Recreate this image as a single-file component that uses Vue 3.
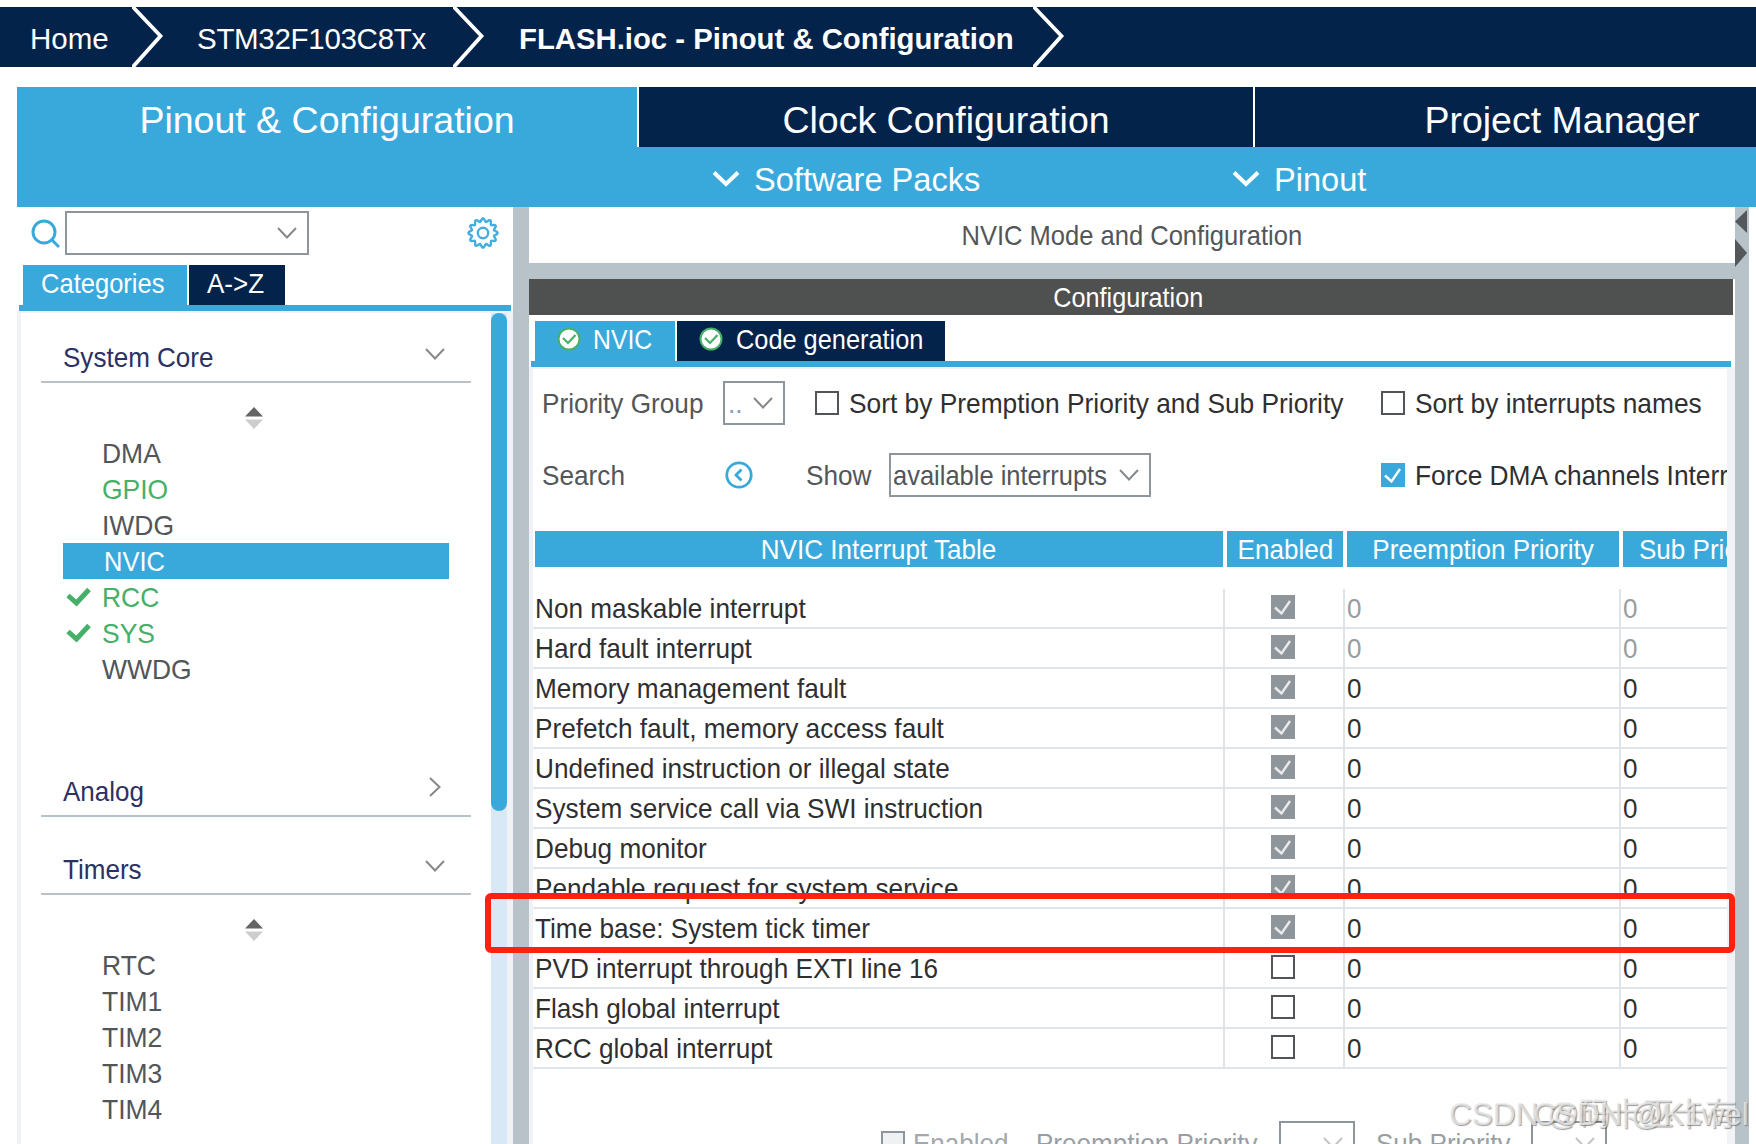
<template>
  <div class="app">
    <nav class="breadcrumb">
      <span class="crumb home">Home</span>
      <svg class="crumb-arrow" viewBox="0 0 34 60"><path d="M-1 -2 L28.5 29 L-1 62" /></svg>
      <span class="crumb chip">STM32F103C8Tx</span>
      <svg class="crumb-arrow" viewBox="0 0 34 60"><path d="M-1 -2 L28.5 29 L-1 62" /></svg>
      <span class="crumb current">FLASH.ioc - Pinout &amp; Configuration</span>
      <svg class="crumb-arrow" viewBox="0 0 34 60"><path d="M-1 -2 L28.5 29 L-1 62" /></svg>
    </nav>

    <div class="main-tabs">
      <div v-for="tab in mainTabs" :key="tab" class="main-tab" :class="{ active: tab === activeTab }">{{ tab }}</div>
    </div>
    <div class="sub-bar">
      <div v-for="menu in menus" :key="menu" class="sub-menu">
        <svg class="menu-chevron" viewBox="0 0 28 18"><path d="M2 2.5 L14 14 L26 2.5" /></svg>
        <span>{{ menu }}</span>
      </div>
    </div>

    <div class="body">
      <aside class="sidebar">
        <div class="search-row">
          <svg class="search-icon" viewBox="0 0 30 30">
            <circle cx="13" cy="13" r="11" />
            <path d="M20 20 L28 28" />
          </svg>
          <div class="combo search-combo">
            <svg class="chevron" viewBox="0 0 20 12"><path d="M1 1 L10 10.5 L19 1" /></svg>
          </div>
          <svg class="gear" viewBox="0 0 32 32">
            <path :d="gearPath" />
            <circle cx="16" cy="16" r="5.2" />
          </svg>
        </div>
        <div class="side-tabs">
          <div class="side-tab active"><span class="txt">Categories</span></div>
          <div class="side-tab dark"><span class="txt">A-&gt;Z</span></div>
        </div>
        <div class="categories">
          <div class="category-list">
            <section v-for="cat in categories" :key="cat.name" class="category">
              <div class="category-head">
                <span class="txt">{{ cat.name }}</span>
                <svg v-if="cat.items.length" class="chevron" viewBox="0 0 20 12"><path d="M1 1 L10 10.5 L19 1" /></svg>
                <svg v-else class="chevron-right" viewBox="0 0 12 20"><path d="M1 1 L10.5 10 L1 19" /></svg>
              </div>
              <template v-if="cat.items.length">
                <div class="sorter">
                  <svg viewBox="0 0 18 22">
                    <path d="M9 0 L18 9.5 H0 Z" fill="#656565" />
                    <path d="M0 12.5 H18 L9 22 Z" fill="#cdcdcd" />
                  </svg>
                </div>
                <ul>
                  <li v-for="item in cat.items" :key="item.name" :class="item.state">
                    <svg v-if="item.checked" class="tick" viewBox="0 0 25 20"><path d="M2 8.5 L10.5 16 L23 2.5" /></svg>
                    <span class="txt">{{ item.name }}</span>
                  </li>
                </ul>
              </template>
            </section>
          </div>
          <div class="scrollbar"><div class="thumb"></div></div>
        </div>
      </aside>

      <main class="content">
        <div class="mode-title"><span class="txt">NVIC Mode and Configuration</span></div>
        <div class="config-title"><span class="txt">Configuration</span></div>
        <div class="config-tabs">
          <div class="config-tab nvic">
            <svg class="ok" viewBox="0 0 24 24"><circle cx="12" cy="12" r="10.5" /><path d="M6 11 L11 16 L18.5 8" /></svg>
            <span class="txt">NVIC</span>
          </div>
          <div class="config-tab dark">
            <svg class="ok" viewBox="0 0 24 24"><circle cx="12" cy="12" r="10.5" /><path d="M6 11 L11 16 L18.5 8" /></svg>
            <span class="txt">Code generation</span>
          </div>
        </div>
        <div class="config-body">
          <div class="option-row">
            <label class="group-label"><span class="txt">Priority Group</span></label>
            <div class="combo group-combo">
              <span class="txt dots">..</span>
              <svg class="chevron" viewBox="0 0 20 12"><path d="M1 1 L10 10.5 L19 1" /></svg>
            </div>
            <div class="check-option sort-priority">
              <span class="box"></span>
              <span class="txt">Sort by Premption Priority and Sub Priority</span>
            </div>
            <div class="check-option">
              <span class="box"></span>
              <span class="txt">Sort by interrupts names</span>
            </div>
          </div>
          <div class="option-row second">
            <label class="search-label"><span class="txt">Search</span></label>
            <svg class="back" viewBox="0 0 28 28"><circle cx="14" cy="14" r="12.2" /><path d="M16.5 8.5 L11 14 L16.5 19.5" /></svg>
            <label class="show-label"><span class="txt">Show</span></label>
            <div class="combo show-combo">
              <span class="txt">available interrupts</span>
              <svg class="chevron" viewBox="0 0 20 12"><path d="M1 1 L10 10.5 L19 1" /></svg>
            </div>
            <div class="check-option force">
              <span class="box blue"><svg viewBox="0 0 24 24"><path d="M4 12.5 L10.5 18.5 L19 6" /></svg></span>
              <span class="txt">Force DMA channels Interrupts</span>
            </div>
          </div>

          <div class="table-head">
            <div><span class="txt">NVIC Interrupt Table</span></div>
            <div><span class="txt">Enabled</span></div>
            <div><span class="txt">Preemption Priority</span></div>
            <div class="sub"><span class="txt">Sub Priority</span></div>
          </div>
          <div class="table-body">
            <div v-for="row in interrupts" :key="row.name" class="table-row" :class="{ locked: row.locked }">
              <div class="name"><span class="txt">{{ row.name }}</span></div>
              <div class="enabled">
                <span class="box" :class="{ grey: row.enabled }">
                  <svg v-if="row.enabled" viewBox="0 0 24 24"><path d="M4 12.5 L10.5 18.5 L19 6" /></svg>
                </span>
              </div>
              <div class="num"><span class="txt">0</span></div>
              <div class="num last"><span class="txt">0</span></div>
            </div>
          </div>

          <div class="footer-row">
            <span class="box disabled"></span>
            <label class="f-enabled"><span class="txt">Enabled</span></label>
            <label class="f-preempt"><span class="txt">Preemption Priority</span></label>
            <div class="combo small"><svg class="chevron" viewBox="0 0 20 12"><path d="M1 1 L10 10.5 L19 1" /></svg></div>
            <label class="f-sub"><span class="txt">Sub Priority</span></label>
            <div class="combo small"><svg class="chevron" viewBox="0 0 20 12"><path d="M1 1 L10 10.5 L19 1" /></svg></div>
          </div>
        </div>
      </main>

      <div class="splitter">
        <svg viewBox="0 0 14 64">
          <path d="M12 3 V26 L0 14.5 Z" />
          <path d="M0 32 L12 46 L0 60 Z" />
        </svg>
      </div>
    </div>

    <div class="highlight"></div>
    <div class="watermark first">CSDN @码卡巫卡有</div>
    <div class="watermark second">CSDN @K1wel</div>
  </div>
</template>

<script setup>
import { ref } from 'vue'

const mainTabs = ['Pinout & Configuration', 'Clock Configuration', 'Project Manager']
const activeTab = ref('Pinout & Configuration')
const menus = ['Software Packs', 'Pinout']

const categories = ref([
  {
    name: 'System Core',
    items: [
      { name: 'DMA' },
      { name: 'GPIO', state: 'used' },
      { name: 'IWDG' },
      { name: 'NVIC', state: 'selected' },
      { name: 'RCC', state: 'used', checked: true },
      { name: 'SYS', state: 'used', checked: true },
      { name: 'WWDG' }
    ]
  },
  { name: 'Analog', items: [] },
  {
    name: 'Timers',
    items: [{ name: 'RTC' }, { name: 'TIM1' }, { name: 'TIM2' }, { name: 'TIM3' }, { name: 'TIM4' }]
  }
])

const interrupts = ref([
  { name: 'Non maskable interrupt', enabled: true, locked: true },
  { name: 'Hard fault interrupt', enabled: true, locked: true },
  { name: 'Memory management fault', enabled: true },
  { name: 'Prefetch fault, memory access fault', enabled: true },
  { name: 'Undefined instruction or illegal state', enabled: true },
  { name: 'System service call via SWI instruction', enabled: true },
  { name: 'Debug monitor', enabled: true },
  { name: 'Pendable request for system service', enabled: true },
  { name: 'Time base: System tick timer', enabled: true },
  { name: 'PVD interrupt through EXTI line 16', enabled: false },
  { name: 'Flash global interrupt', enabled: false },
  { name: 'RCC global interrupt', enabled: false }
])

// wavy outline of the settings gear, 12 teeth
function gearOutline(teeth) {
  const points = []
  for (let i = 0; i < 120; i++) {
    const a = (i / 120) * Math.PI * 2
    const r = 13 + 1.6 * Math.cos(a * teeth)
    points.push(`${(16 + r * Math.cos(a)).toFixed(2)} ${(16 + r * Math.sin(a)).toFixed(2)}`)
  }
  return 'M' + points.join('L') + 'Z'
}
const gearPath = gearOutline(12)
</script>

<style>
body {
  margin: 0;
  background: #fff;
  overflow: hidden;
}
</style>

<style scoped>
.app {
  position: relative;
  box-sizing: border-box;
  width: 1756px;
  height: 1144px;
  padding-top: 7px;
  overflow: hidden;
  display: flex;
  flex-direction: column;
  background: #fff;
  color: #525659;
  font-family: "Liberation Sans", Arial, sans-serif;
  font-size: 28px;
  line-height: 36px;
  white-space: nowrap;
}
svg {
  display: block;
  flex: none;
  fill: none;
}
/* slightly condensed label text */
.txt {
  display: inline-block;
  transform: translateY(1px) scaleX(0.93);
  transform-origin: left center;
}

/* breadcrumb */
.breadcrumb {
  flex: none;
  display: flex;
  height: 60px;
  padding-left: 30px;
  background: #03234b;
  color: #fff;
  font-size: 29.5px;
  line-height: 63px;
}
.crumb { flex: none; }
.home { width: 102px; }
.chip { width: 256px; margin-left: 31px; letter-spacing: -0.3px; }
.current { width: 514px; margin-left: 32px; font-weight: bold; font-size: 29.3px; }
.crumb-arrow {
  width: 34px;
  height: 60px;
}
.crumb-arrow path {
  stroke: #fff;
  stroke-width: 3.8;
}

/* top tabs */
.main-tabs {
  flex: none;
  display: flex;
  gap: 2px;
  height: 60px;
  margin: 20px 0 0 17px;
}
.main-tab {
  flex: none;
  box-sizing: border-box;
  width: 614px;
  padding-top: 6px;
  background: #03234b;
  color: #fff;
  font-size: 37.5px;
  line-height: 54px;
  text-align: center;
}
.main-tab.active {
  width: 620px;
  background: #39a9dc;
}
.sub-bar {
  flex: none;
  display: flex;
  height: 60px;
  margin-left: 17px;
  padding-left: 695px;
  background: #39a9dc;
  color: #fff;
  font-size: 32.6px;
  line-height: 65px;
}
.sub-menu {
  display: flex;
  width: 520px;
  gap: 14px;
}
.menu-chevron {
  width: 28px;
  height: 18px;
  margin-top: 23px;
}
.menu-chevron path {
  stroke: #fff;
  stroke-width: 4;
}

.body {
  flex: 1;
  min-height: 0;
  display: flex;
}

/* combos, checkboxes */
.combo {
  flex: none;
  box-sizing: border-box;
  display: flex;
  align-items: center;
  height: 44px;
  border: 2px solid #8f969b;
}
.chevron {
  width: 20px;
  height: 12px;
}
.chevron path, .chevron-right path {
  stroke: #85898c;
  stroke-width: 2;
}
.combo .chevron { margin-left: auto; }
.box {
  flex: none;
  box-sizing: border-box;
  width: 24px;
  height: 24px;
  border: 2px solid #525557;
}
.box svg {
  width: 24px;
  height: 24px;
  margin: -2px;
}
.box path {
  stroke: #fff;
  stroke-width: 2.4;
}
.box.blue { background: #39a9dc; border-color: #39a9dc; }
.box.grey { background: #8f969b; border-color: #8f969b; }
.box.grey path { stroke: #e8eaec; }
.box.disabled { background: #eff1f3; border-color: #8f969b; }

/* sidebar */
.sidebar {
  flex: none;
  box-sizing: border-box;
  width: 529px;
  padding-left: 17px;
  border-right: 16px solid #b7c2c9;
  display: flex;
  flex-direction: column;
}
.search-row {
  flex: none;
  display: flex;
  align-items: flex-start;
  height: 58px;
}
.search-icon {
  width: 30px;
  height: 30px;
  margin: 12px 4px 0 14px;
  stroke: #39a9dc;
  stroke-width: 3;
}
.search-combo {
  width: 244px;
  margin-top: 4px;
  padding-right: 10px;
}
.gear {
  width: 32px;
  height: 32px;
  margin: 10px 0 0 158px;
  stroke: #45aede;
  stroke-width: 2.4;
}
.side-tabs {
  flex: none;
  display: flex;
  gap: 2px;
  height: 40px;
  margin-left: 2px;
  padding-left: 4px;
  width: 488px;
  border-bottom: 6px solid #39a9dc;
  color: #fff;
  line-height: 36px;
}
.side-tab { box-sizing: border-box; }
.side-tab.active { width: 164px; padding-left: 18px; background: #39a9dc; }
.side-tab.dark { width: 96px; padding-left: 18px; background: #03234b; }
.side-tab.active .txt { transform: translateY(1px) scaleX(0.912); }
.categories {
  flex: 1;
  min-height: 0;
  display: flex;
  border: solid #f0f2f5;
  border-width: 2px 6px 0 4px;
}
.category-list {
  flex: 1;
  overflow: hidden;
}
.scrollbar {
  width: 16px;
  background: #d9e8f5;
}
.thumb {
  height: 498px;
  border-radius: 8px;
  background: #39a9dc;
}
.category-head {
  box-sizing: border-box;
  display: flex;
  justify-content: space-between;
  align-items: flex-end;
  width: 430px;
  height: 70px;
  margin-left: 20px;
  padding: 0 26px 6px 22px;
  border-bottom: 2px solid #b7c2c9;
  color: #2b3163;
}
.category + .category .category-head { margin-top: 8px; }
.category-head .chevron { margin-bottom: 15px; }
.chevron-right {
  width: 12px;
  height: 20px;
  margin: 0 4px 12px 0;
}
.category:first-child ul { margin-bottom: 60px; }
.sorter {
  height: 52px;
  padding: 24px 0 0 224px;
  box-sizing: border-box;
}
.sorter svg {
  width: 18px;
  height: 22px;
}
ul {
  margin: 0;
  padding: 0;
  list-style: none;
}
li {
  display: flex;
  align-items: center;
  box-sizing: border-box;
  width: 386px;
  height: 36px;
  margin-left: 42px;
  padding-left: 39px;
}
li .txt { transform: translateY(1px) scaleX(0.945); }
.used { color: #46b069; }
.selected { background: #39a9dc; color: #fff; padding-left: 41px; }
.selected .txt { transform: translateY(1px) scaleX(0.91); }
.tick {
  width: 25px;
  height: 20px;
  margin: 0 11px 0 -36px;
}
.tick path {
  stroke: #46b069;
  stroke-width: 5;
}

/* content */
.content {
  flex: none;
  width: 1206px;
  overflow: hidden;
}
.mode-title, .config-title {
  text-align: center;
}
.mode-title {
  height: 56px;
  border-bottom: 16px solid #b7c2c9;
  line-height: 56px;
}
.mode-title .txt, .config-title .txt, .table-head .txt {
  transform-origin: center;
}
.mode-title .txt { transform: translateY(1px) scaleX(0.912); }
.config-title {
  width: 1204px;
  height: 36px;
  background: #4f5150;
  color: #fff;
}
.config-title .txt { transform: translate(-3px, 1px) scaleX(0.9); }
.config-tabs {
  display: flex;
  gap: 2px;
  height: 40px;
  width: 1196px;
  margin: 6px 0 0 2px;
  padding-left: 4px;
  border-bottom: 6px solid #39a9dc;
  color: #fff;
}
.config-tab {
  display: flex;
  box-sizing: border-box;
  padding: 0 0 0 22px;
  gap: 13px;
  line-height: 36px;
}
.nvic { width: 140px; gap: 12px; background: #39a9dc; }
.config-tab.dark { width: 268px; background: #03234b; }
.nvic .txt { transform: translateY(1px) scaleX(0.885); }
.config-tab.dark .txt { transform: translateY(1px) scaleX(0.905); }
.ok {
  width: 24px;
  height: 24px;
  margin-top: 6px;
}
.ok circle { fill: #fff; stroke: #46b069; stroke-width: 2; }
.ok path { stroke: #46b069; stroke-width: 2.2; }
.config-body {
  border: solid #f0f2f5;
  border-width: 2px 8px 0 4px;
  height: 775px;
  overflow: hidden;
}
.option-row {
  display: flex;
  align-items: center;
  height: 44px;
  margin-top: 12px;
  padding-left: 9px;
}
.option-row > * { flex: none; }
.option-row.second { margin-top: 28px; }
.option-row > label .txt { transform: translateY(1px) scaleX(0.935); }
.group-label { width: 181px; }
.search-label { width: 183px; }
.group-combo { width: 62px; padding: 0 10px 0 3px; }
.dots { color: #8d9bb8; }
.check-option {
  display: flex;
  align-items: center;
  gap: 10px;
  color: #2f2f31;
}
.check-option .txt { transform: translateY(1px) scaleX(0.94); }
.sort-priority { width: 566px; margin-left: 30px; }
.back {
  width: 28px;
  height: 28px;
  stroke: #39a9dc;
  stroke-width: 2.8;
}
.show-label { width: 83px; margin-left: 53px; }
.show-combo { width: 262px; padding: 0 10px 0 2px; }
.show-combo .txt { width: 226px; transform: translateY(1px) scaleX(0.91); }
.show-combo .chevron { margin-left: 0; }
.force { margin-left: 230px; }

.table-head {
  display: grid;
  grid-template-columns: 688px 116px 272px 272px;
  gap: 4px;
  height: 36px;
  margin: 34px 0 0 2px;
  color: #fff;
  text-align: center;
}
.table-head div { background: #39a9dc; }
.table-head .sub { text-align: left; padding-left: 16px; }
.table-head .sub .txt { transform-origin: left; }
.table-body { margin-top: 22px; }
.table-row {
  display: grid;
  grid-template-columns: 692px 120px 276px 106px;
  height: 38px;
  border-bottom: 2px solid #dfe4e8;
  color: #2f2f31;
  line-height: 38px;
}
.table-row > div {
  box-sizing: border-box;
  border-right: 2px solid #dfe4e8;
}
.table-row > .last { border-right: 0; }
.name { padding-left: 1px; }
.name .txt { transform: translate(1px, 1px) scaleX(0.935); }
.enabled {
  display: flex;
  align-items: center;
  padding: 0 0 2px 46px;
}
.num { padding-left: 2px; }
.locked .num { color: #979da1; }

.footer-row {
  display: flex;
  align-items: center;
  height: 44px;
  margin-top: 52px;
  padding-left: 348px;
  color: #a3a8ac;
}
.footer-row > * { flex: none; }
.f-enabled { width: 123px; margin-left: 8px; }
.f-preempt { width: 243px; }
.f-sub { width: 155px; margin-left: 21px; }
.f-preempt .txt, .f-sub .txt { color: #999ea2; }
.small { width: 76px; padding-right: 10px; }
.small .chevron { opacity: 0.5; }

.splitter {
  width: 14px;
  background: #b7c2c9;
}
.splitter svg {
  width: 14px;
  height: 64px;
  fill: #55585a;
}

/* marks over the window */
.highlight {
  position: absolute;
  left: 485px;
  top: 893px;
  box-sizing: border-box;
  width: 1250px;
  height: 60px;
  border: 6px solid #ff2010;
  border-radius: 6px;
}
.watermark {
  position: absolute;
  top: 1095px;
  color: rgba(235, 235, 235, 0.8);
  font-family: "Liberation Sans", "Noto Sans CJK SC", sans-serif;
  font-size: 31.5px;
  line-height: 38px;
  text-shadow: 1px 1px 1px rgba(90, 90, 90, 0.6);
}
.first { left: 1449px; }
.second { left: 1533px; }
</style>
